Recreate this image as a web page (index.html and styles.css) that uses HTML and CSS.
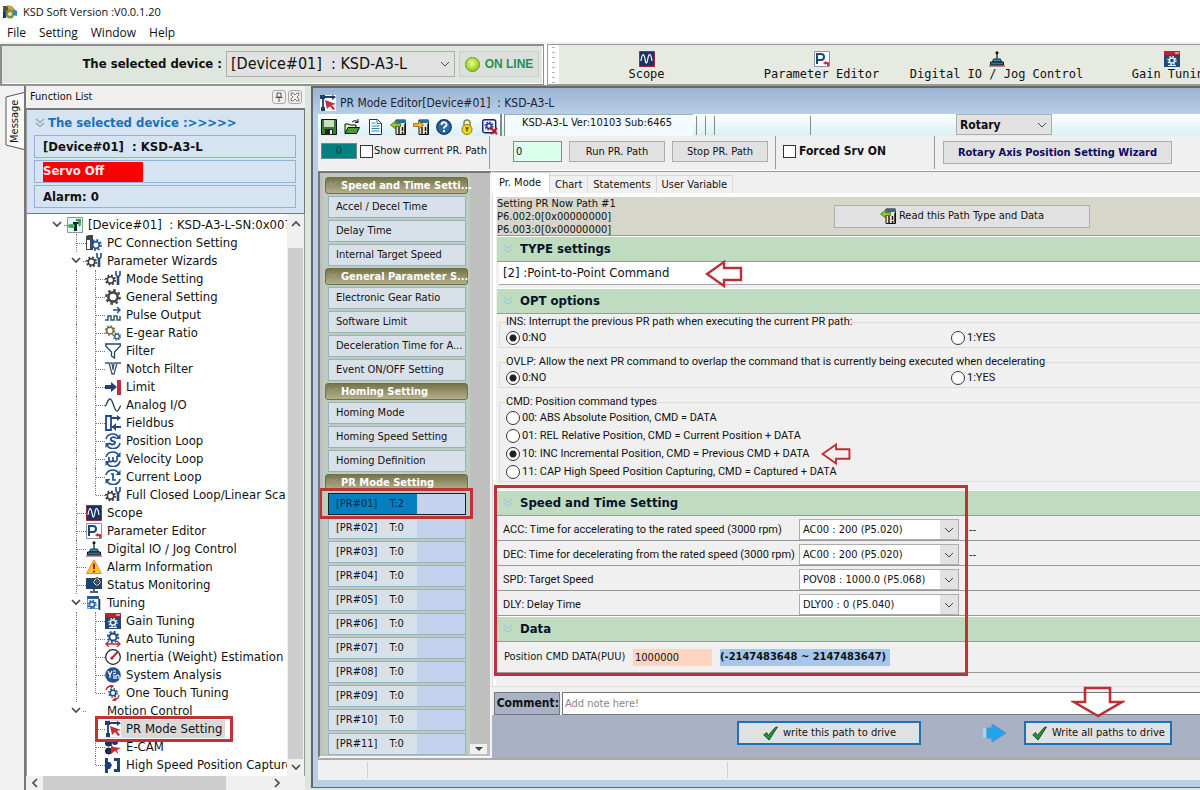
FILE: index.html
```html
<!DOCTYPE html>
<html lang="en">
<head>
<meta charset="utf-8">
<title>KSD Soft</title>
<link rel="stylesheet" href="styles.css">
</head>
<body>
<svg class="defs" aria-hidden="true">
  <symbol id="i-app" viewBox="0 0 16 16"><path d="M1 2h5l2 2v5H1z" fill="#4a5a3a"/><path d="M5 1l5 1 3 4-6 1z" fill="#c9a23c"/><path d="M1 8h3v6H1z" fill="#1b2a8a"/><circle cx="8" cy="10" r="4.5" fill="#7d9440"/><circle cx="8" cy="10" r="2" fill="#e6e3b0"/><path d="M11 5l4 2v5l-4-1z" fill="#2b86c4"/></symbol>
  <symbol id="i-wrench" viewBox="0 0 16 16"><circle cx="5.500" cy="9" r="3.200" fill="none" stroke="#3b3b3b" stroke-width="1.500"/><circle cx="5.500" cy="9" r="4.700" fill="none" stroke="#3b3b3b" stroke-width="1.800" stroke-dasharray="1.800 1.890"/><path d="M11 0v4l2 2 2-2V0" fill="none" stroke="#244c83" stroke-width="1.6"/><path d="M13 5v9" stroke="#244c83" stroke-width="2.6"/></symbol>
  <symbol id="i-gear" viewBox="0 0 16 16"><circle cx="8" cy="8" r="4.6" fill="none" stroke="#474747" stroke-width="2.6"/><circle cx="8" cy="8" r="6.7" fill="none" stroke="#474747" stroke-width="2.4" stroke-dasharray="2.6 2.66"/></symbol>
  <symbol id="i-device" viewBox="0 0 16 16"><path d="M.5.5h15v15H.5z" fill="#e8f3f6" stroke="#7c9a9c"/><path d="M6 5h6v2h-2v7H7V7H6z" fill="#16202e"/><path d="M9 2h5v3h-3V4H9z" fill="#3f9a4e"/><ellipse cx="4.500" cy="9" rx="3.500" ry="2" fill="#3fae55"/><path d="M11 5l3-1v4l-2 2z" fill="#3fae55"/></symbol>
  <symbol id="i-pc" viewBox="0 0 16 16"><path d="M0 1l3-1h4v15H0z" fill="#444"/><path d="M1 5h3v9H1z" fill="#fff"/><circle cx="10" cy="10" r="3.3" fill="#fff" stroke="#1f5b9c" stroke-width="1.8"/><circle cx="10" cy="10" r="5" fill="none" stroke="#1f5b9c" stroke-width="1.8" stroke-dasharray="1.9 2"/></symbol>
  <symbol id="i-pulse" viewBox="0 0 16 16"><path d="M0 13h3V9h3v4h3V9h3v4h3V9" fill="none" stroke="#2f5872" stroke-width="1.5"/><path d="M8 3h7M12 0l3 3-3 3" fill="none" stroke="#1f4f8c" stroke-width="1.4"/></symbol>
  <symbol id="i-egear" viewBox="0 0 16 16"><circle cx="5" cy="5.5" r="3.3" fill="none" stroke="#6e6a3c" stroke-width="1.5"/><circle cx="5" cy="5.5" r="4.6" fill="none" stroke="#6e6a3c" stroke-width="1.4" stroke-dasharray="1.7 1.9"/><circle cx="12" cy="11.5" r="2.3" fill="none" stroke="#28598c" stroke-width="1.3"/><circle cx="12" cy="11.5" r="3.5" fill="none" stroke="#28598c" stroke-width="1.3" stroke-dasharray="1.3 1.45"/></symbol>
  <symbol id="i-filter" viewBox="0 0 16 16"><path d="M.7 1h14.6v2L9.5 9v6l-3-2V9L.7 3z" fill="#fff" stroke="#234563" stroke-width="1.3"/></symbol>
  <symbol id="i-notch" viewBox="0 0 16 16"><path d="M0 2h4l3 11h2l3-11h4M5 2h2l1 7 1-7h2" fill="none" stroke="#3b5879" stroke-width="1.300"/></symbol>
  <symbol id="i-limit" viewBox="0 0 16 16"><path d="M0 6h6V3l6 5-6 5v-3H0z" fill="#24407c"/><path d="M12 1h4v15h-4z" fill="#c12a45"/></symbol>
  <symbol id="i-analog" viewBox="0 0 16 16"><path d="M0 9c2 0 2-7 5-7s4 12 7 12c2 0 2-4 4-5" fill="none" stroke="#2a4560" stroke-width="1.4"/></symbol>
  <symbol id="i-bus" viewBox="0 0 16 16"><path d="M1 1h5v14H1zM6 3h8M7 12h9" fill="none" stroke="#1f487f" stroke-width="1.8"/><path d="M12 0l4 3-4 3zM11 8l-4 4 4 4z" fill="#1f487f"/></symbol>
  <symbol id="i-loopbase" viewBox="0 0 16 16"><path d="M1 6a7 7 0 0 1 13-1M15 10A7 7 0 0 1 2 12" fill="none" stroke="#20508a" stroke-width="1.6"/><path d="M15.500 1v5h-5zM.5 15v-5h5z" fill="#20508a"/></symbol>
  <symbol id="i-pos" viewBox="0 0 16 16"><use href="#i-loopbase"/><path d="M11 5c-3-2-6 0-5 2s5 1 4 3-4 2-6 0" fill="none" stroke="#20508a" stroke-width="1.8"/></symbol>
  <symbol id="i-vel" viewBox="0 0 16 16"><use href="#i-loopbase"/><path d="M4 6c-1 5 3 6 4 3 1 3 5 2 4-3M8 6v3" fill="none" stroke="#20508a" stroke-width="1.7"/></symbol>
  <symbol id="i-cur" viewBox="0 0 16 16"><use href="#i-loopbase"/><path d="M8 5v6h3M6 5h3" fill="none" stroke="#20508a" stroke-width="1.7"/></symbol>
  <symbol id="i-scope" viewBox="0 0 16 16"><path d="M.5.5h15v15H.5z" fill="#1b3263" stroke="#a0283a"/><path d="M2 10c1-8 3-8 4-2s2 5 3-1 3-4 4 3" fill="none" stroke="#fff" stroke-width="1.2"/></symbol>
  <symbol id="i-param" viewBox="0 0 16 16"><path d="M.5.5h15v15H.5z" fill="#fff" stroke="#8296aa"/><path d="M3 13V3h4a3 3 0 0 1 0 6H4" fill="none" stroke="#1d4779" stroke-width="2"/><path d="M9 12l3-2v1h3v4h-2v-2h-1v1z" fill="#cf2e38"/></symbol>
  <symbol id="i-jog" viewBox="0 0 16 16"><path d="M8 1v9" stroke="#111" stroke-width="1.2"/><circle cx="8" cy="1.800" r="1.500" fill="#111"/><path d="M4.500 8h7l1 3h-9z" fill="#2f93b5" stroke="#12344a"/><path d="M1.500 11h13v3h-13z" fill="#237896" stroke="#111"/><path d="M0 15h16" stroke="#a02330"/></symbol>
  <symbol id="i-alarm" viewBox="0 0 16 16"><path d="M8 .8L15.400 14.500H.6z" fill="#fbc62c" stroke="#dc8f1c"/><path d="M8 4.500v5.500M8 11.500v2" stroke="#b3231e" stroke-width="2"/></symbol>
  <symbol id="i-monitor" viewBox="0 0 16 16"><path d="M0 1h16v11H0z" fill="#1b4473"/><path d="M7 12h2v2h3v2H4v-2h3z" fill="#52606c"/><path d="M11 0l5 5-5 5-5-5z" fill="#dfe8ef" stroke="#111" stroke-width=".7"/><circle cx="11" cy="5" r="2" fill="none" stroke="#111"/><path d="M11 1v8M7 5h8" stroke="#111" stroke-width=".8"/></symbol>
  <symbol id="i-tuning" viewBox="0 0 16 16"><path d="M1.500 3h11v10.500h-11z" fill="#f3f7fa" stroke="#6f9ccb"/><path d="M1 1h12v3H1z" fill="#295a92"/><circle cx="6" cy="9.500" r="2.600" fill="none" stroke="#2767a5" stroke-width="1.600"/><circle cx="6" cy="9.500" r="4" fill="none" stroke="#2767a5" stroke-width="1.400" stroke-dasharray="1.500 1.640"/><path d="M13.500 4v11" stroke="#333" stroke-width="1.600"/></symbol>
  <symbol id="i-gain" viewBox="0 0 16 16"><path d="M0 0h16v16H0z" fill="#214a79"/><path d="M0 0h16v4H0z" fill="#b9252e"/><path d="M11 2h4" stroke="#fff"/><circle cx="8" cy="9.500" r="2.600" fill="none" stroke="#e9f1f7" stroke-width="1.500"/><circle cx="8" cy="9.500" r="4" fill="none" stroke="#e9f1f7" stroke-width="1.400" stroke-dasharray="1.500 1.640"/><path d="M4 14.500h8" stroke="#e9f1f7"/></symbol>
  <symbol id="i-auto" viewBox="0 0 16 16"><circle cx="8" cy="6" r="3.600" fill="none" stroke="#1f4c86" stroke-width="2"/><circle cx="8" cy="6" r="5.300" fill="none" stroke="#1f4c86" stroke-width="1.800" stroke-dasharray="2 2.160"/><path d="M1 13h14M4 10l-3 3 3 3M12 10l3 3-3 3" fill="none" stroke="#b62b35" stroke-width="1.300"/></symbol>
  <symbol id="i-inertia" viewBox="0 0 16 16"><circle cx="8" cy="8" r="7.300" fill="#fff" stroke="#1a1a1a" stroke-width="1.200"/><path d="M6 10L12.500 3" stroke="#b62b35" stroke-width="2"/><circle cx="7" cy="9" r="1.500" fill="#b62b35"/></symbol>
  <symbol id="i-system" viewBox="0 0 16 16"><circle cx="8" cy="8" r="7.800" fill="#24548c"/><path d="M3 4l2 4 2-4M5 8v3M8 4h3M9 8v4M11 12V9q2-2 3 0v3M8 7l3-1" fill="none" stroke="#fff" stroke-width="1.200"/></symbol>
  <symbol id="i-touch" viewBox="0 0 16 16"><circle cx="8" cy="8" r="2.800" fill="none" stroke="#1f4c86" stroke-width="1.600"/><circle cx="8" cy="8" r="4.200" fill="none" stroke="#1f4c86" stroke-width="1.500" stroke-dasharray="1.600 1.700"/><path d="M1 5q1-4 6-4M5 0l3 1-2 2M14 10q0 4-5 5M11 13l-3 2 3 1" fill="none" stroke="#b62b35" stroke-width="1.300"/></symbol>
  <symbol id="i-pr" viewBox="0 0 16 16"><path d="M0 0h16v16H0z" fill="#fff"/><path d="M3 15V2h12" fill="none" stroke="#20406c" stroke-width="1.800"/><path d="M0 0h5v4H0zM1 12h4v4H1zM12 0l4 2-4 3z" fill="#20406c"/><path d="M5 5l11 4-4 1 3 4-2 1-3-4-3 3z" fill="#c52c3c"/></symbol>
  <symbol id="i-ecam" viewBox="0 0 16 16"><circle cx="3.500" cy="4" r="3.500" fill="#1c2f66"/><circle cx="10" cy="3" r="3" fill="#1c2f66"/><circle cx="3.500" cy="12" r="3" fill="#1c2f66" stroke="#111"/><path d="M6 4l2 4 8 1-4 2 1 4-3-3-4 3z" fill="#c52c3c"/></symbol>
  <symbol id="i-capture" viewBox="0 0 16 16"><path d="M0 1h3v4h2l2 3-2 4H3v4H0zM9 1h6v14H9v-3h3V4H9z" fill="#1d3f7c"/></symbol>
  <symbol id="i-save" viewBox="0 0 16 16"><path d="M.5.5h15v15H.5z" fill="#3d7b33" stroke="#111"/><path d="M3 1h10v7H3z" fill="#c9dcc4"/><path d="M4 10h8v6H4z" fill="#222"/><path d="M9 11h2v4H9z" fill="#eee"/></symbol>
  <symbol id="i-open" viewBox="0 0 16 16"><path d="M1 14V5h4l1 1h6v2" fill="#dff0b2" stroke="#111"/><path d="M1 14.500l3-6h11.500l-3 6z" fill="#4a9a36" stroke="#111"/><path d="M8 3q3-3 6 0M14 0v3.500h-3" fill="none" stroke="#111"/></symbol>
  <symbol id="i-doc" viewBox="0 0 16 16"><path d="M2.500.5h8l4 4v11h-12z" fill="#fff" stroke="#1b3350"/><path d="M10 .5v4h4M4.500 4h4M4.500 7h8M4.500 9.500h8M4.500 12h8" fill="none" stroke="#2f86a8"/></symbol>
  <symbol id="i-read" viewBox="0 0 16 16"><path d="M6 1h9.500v14.500H6z" fill="#ece4cc" stroke="#111"/><path d="M7 1h9v3H7z" fill="#1e7398"/><path d="M9 7v8M12.500 8v4M12.500 13v2M15 5v10" stroke="#111" stroke-width="1.400"/><path d="M.5 6l5-4v2.500h5v3h-5V10z" fill="#94c23c" stroke="#4a6a1c" stroke-width=".8"/></symbol>
  <symbol id="i-write" viewBox="0 0 16 16"><path d="M6 1h9.500v14.500H6z" fill="#ece4cc" stroke="#111"/><path d="M7 1h9v3H7z" fill="#1e7398"/><path d="M9 8v7M12.500 8v4M12.500 13v2M15 5v10" stroke="#111" stroke-width="1.400"/><path d="M10.500 6l-5-4v2.500h-5v3h5V10z" fill="#f4b52c" stroke="#8a5a14" stroke-width=".8"/></symbol>
  <symbol id="i-help" viewBox="0 0 16 16"><circle cx="8" cy="8" r="7.300" fill="#2b67a0" stroke="#14304f" stroke-width="1.200"/><path d="M5.500 6c0-4 5.500-3 5 0-.3 1.500-2.500 1.500-2.500 3.500M8 11v2" fill="none" stroke="#fff" stroke-width="2"/></symbol>
  <symbol id="i-lock" viewBox="0 0 16 16"><path d="M5 7V4q0-3 3-3t3 3v3" fill="none" stroke="#8d8240" stroke-width="1.500"/><circle cx="8" cy="10.500" r="5" fill="#f2d81c" stroke="#8a7410"/><path d="M8 8.500v4M6.500 9h3" stroke="#5c4c08" stroke-width="1.400"/></symbol>
  <symbol id="i-cancel" viewBox="0 0 16 16"><rect x=".7" y=".7" width="13" height="13" rx="2" fill="#e9eef8" stroke="#1b1f70" stroke-width="1.400"/><circle cx="7" cy="7" r="2.400" fill="none" stroke="#2b3090" stroke-width="1.500"/><circle cx="7" cy="7" r="3.800" fill="none" stroke="#2b3090" stroke-width="1.400" stroke-dasharray="1.500 1.480"/><path d="M9 9l6 6M15 9l-6 6" stroke="#c4141c" stroke-width="2"/></symbol>
  <symbol id="i-check" viewBox="0 0 16 16"><path d="M.8 9.500l3-2.500 2 3L13 1.500l2.500-.5L6.500 15z" fill="#1d9a2c" stroke="#0b3d12" stroke-width=".9"/></symbol>
  <symbol id="i-down" viewBox="0 0 10 10"><path d="M1 2l4 4 4-4" fill="none" stroke="currentColor" stroke-width="1.600"/></symbol>
  <symbol id="i-dbl" viewBox="0 0 10 10"><path d="M1 1l4 3.500L9 1M1 5l4 3.500L9 5" fill="none" stroke="currentColor" stroke-width="1.200"/></symbol>
  <symbol id="i-redleft" viewBox="0 0 38 28"><path d="M2 14L19 2v6h17v12H19v6z" fill="none" stroke="#bb3034" stroke-width="2.400"/></symbol>
  <symbol id="i-reddown" viewBox="0 0 54 32"><path d="M27 30L3 16h11V2h25v14h12z" fill="none" stroke="#bb3034" stroke-width="2.600"/></symbol>
</svg>

<header class="titlebar"><svg class="ic"><use href="#i-app"/></svg><span>KSD Soft Version :V0.0.1.20</span></header>
<nav class="menu"><a href="#">File</a><a href="#">Setting</a><a href="#">Window</a><a href="#">Help</a></nav>

<div class="topbar">
  <div class="devbar">
    <label for="dev">The selected device :</label>
    <select id="dev" class="sel sel-big"><option>[Device#01] &nbsp;: KSD-A3-L</option></select>
    <button class="online"><i class="lamp"></i>ON LINE</button>
  </div>
  <div class="tools">
    <i class="grip"></i>
    <button><svg class="ic"><use href="#i-scope"/></svg>Scope</button>
    <button><svg class="ic"><use href="#i-param"/></svg>Parameter Editor</button>
    <button><svg class="ic"><use href="#i-jog"/></svg>Digital IO / Jog Control</button>
    <button><svg class="ic"><use href="#i-gain"/></svg>Gain Tuning</button>
  </div>
</div>

<main class="work">
  <aside class="strip"><button>Message</button></aside>

  <section class="panel">
    <header class="panel-head"><span>Function List</span>
      <button aria-label="Pin"><svg viewBox="0 0 10 10"><path d="M3 1h4v4H3zM1.500 5.500h7M5 6v4" fill="none" stroke="#555"/></svg></button>
      <button aria-label="Close"><svg viewBox="0 0 10 10"><path d="M1 1h2l2 2 2-2h2v2L7 5l2 2v2H7L5 7 3 9H1V7l2-2-2-2z" fill="none" stroke="#777"/></svg></button>
    </header>
    <div class="info">
      <div class="info-title"><svg class="dbl"><use href="#i-dbl"/></svg>The selected device :&gt;&gt;&gt;&gt;&gt;</div>
      <div class="info-row">[Device#01] &nbsp;: KSD-A3-L</div>
      <div class="info-row"><span class="servo">Servo Off</span></div>
      <div class="info-row">Alarm: 0</div>
    </div>
    <div class="treebox">
      <div class="tree">
        <div class="row open"><i class="cell"><svg class="chev"><use href="#i-down"/></svg></i><svg class="ic"><use href="#i-device"/></svg>[Device#01] &nbsp;: KSD-A3-L-SN:0x007</div>
        <div class="row l1"><i class="cell"></i><svg class="ic"><use href="#i-pc"/></svg>PC Connection Setting</div>
        <div class="row l1 open"><i class="cell"><svg class="chev"><use href="#i-down"/></svg></i><svg class="ic"><use href="#i-wrench"/></svg>Parameter Wizards</div>
        <div class="row l2"><i class="cell"></i><svg class="ic"><use href="#i-wrench"/></svg>Mode Setting</div>
        <div class="row l2"><i class="cell"></i><svg class="ic"><use href="#i-gear"/></svg>General Setting</div>
        <div class="row l2"><i class="cell"></i><svg class="ic"><use href="#i-pulse"/></svg>Pulse Output</div>
        <div class="row l2"><i class="cell"></i><svg class="ic"><use href="#i-egear"/></svg>E-gear Ratio</div>
        <div class="row l2"><i class="cell"></i><svg class="ic"><use href="#i-filter"/></svg>Filter</div>
        <div class="row l2"><i class="cell"></i><svg class="ic"><use href="#i-notch"/></svg>Notch Filter</div>
        <div class="row l2"><i class="cell"></i><svg class="ic"><use href="#i-limit"/></svg>Limit</div>
        <div class="row l2"><i class="cell"></i><svg class="ic"><use href="#i-analog"/></svg>Analog I/O</div>
        <div class="row l2"><i class="cell"></i><svg class="ic"><use href="#i-bus"/></svg>Fieldbus</div>
        <div class="row l2"><i class="cell"></i><svg class="ic"><use href="#i-pos"/></svg>Position Loop</div>
        <div class="row l2"><i class="cell"></i><svg class="ic"><use href="#i-vel"/></svg>Velocity Loop</div>
        <div class="row l2"><i class="cell"></i><svg class="ic"><use href="#i-cur"/></svg>Current Loop</div>
        <div class="row l2 last"><i class="cell"></i><svg class="ic"><use href="#i-wrench"/></svg>Full Closed Loop/Linear Sca</div>
        <div class="row l1"><i class="cell"></i><svg class="ic"><use href="#i-scope"/></svg>Scope</div>
        <div class="row l1"><i class="cell"></i><svg class="ic"><use href="#i-param"/></svg>Parameter Editor</div>
        <div class="row l1"><i class="cell"></i><svg class="ic"><use href="#i-jog"/></svg>Digital IO / Jog Control</div>
        <div class="row l1"><i class="cell"></i><svg class="ic"><use href="#i-alarm"/></svg>Alarm Information</div>
        <div class="row l1"><i class="cell"></i><svg class="ic"><use href="#i-monitor"/></svg>Status Monitoring</div>
        <div class="row l1 open"><i class="cell"><svg class="chev"><use href="#i-down"/></svg></i><svg class="ic"><use href="#i-tuning"/></svg>Tuning</div>
        <div class="row l2"><i class="cell"></i><svg class="ic"><use href="#i-gain"/></svg>Gain Tuning</div>
        <div class="row l2"><i class="cell"></i><svg class="ic"><use href="#i-auto"/></svg>Auto Tuning</div>
        <div class="row l2"><i class="cell"></i><svg class="ic"><use href="#i-inertia"/></svg>Inertia (Weight) Estimation</div>
        <div class="row l2"><i class="cell"></i><svg class="ic"><use href="#i-system"/></svg>System Analysis</div>
        <div class="row l2 last"><i class="cell"></i><svg class="ic"><use href="#i-touch"/></svg>One Touch Tuning</div>
        <div class="row l1 open"><i class="cell"><svg class="chev"><use href="#i-down"/></svg></i><svg class="ic"></svg>Motion Control</div>
        <div class="row l2 end picked"><i class="cell"></i><span class="pick"><svg class="ic"><use href="#i-pr"/></svg>PR Mode Setting<i class="mark"></i></span></div>
        <div class="row l2 end"><i class="cell"></i><svg class="ic"><use href="#i-ecam"/></svg>E-CAM</div>
        <div class="row l2 end last"><i class="cell"></i><svg class="ic"><use href="#i-capture"/></svg>High Speed Position Capture</div>
      </div>
      <div class="vbar"><svg class="chev up"><use href="#i-down"/></svg><i class="vthumb"></i><svg class="chev"><use href="#i-down"/></svg></div>
    </div>
    <div class="hbar"><svg class="chev left"><use href="#i-down"/></svg><i class="hthumb"></i><svg class="chev right"><use href="#i-down"/></svg></div>
  </section>

  <section class="window">
    <header class="win-title"><svg class="ic"><use href="#i-pr"/></svg>PR Mode Editor[Device#01] &nbsp;: KSD-A3-L</header>
    <div class="win-body">
      <div class="bar1">
        <div class="icons">
          <button aria-label="Save"><svg class="ic"><use href="#i-save"/></svg></button>
          <button aria-label="Open"><svg class="ic"><use href="#i-open"/></svg></button>
          <button aria-label="Document"><svg class="ic"><use href="#i-doc"/></svg></button>
          <button aria-label="Read"><svg class="ic"><use href="#i-read"/></svg></button>
          <button aria-label="Write"><svg class="ic"><use href="#i-write"/></svg></button>
          <button aria-label="Help"><svg class="ic"><use href="#i-help"/></svg></button>
          <button aria-label="Lock"><svg class="ic"><use href="#i-lock"/></svg></button>
          <button aria-label="Cancel"><svg class="ic"><use href="#i-cancel"/></svg></button>
        </div>
        <div class="ver">KSD-A3-L Ver:10103 Sub:6465</div>
        <i class="vl"></i><i class="vl"></i><i class="vl"></i><i class="vl far"></i>
        <select class="sel sel-rotary" aria-label="Axis type"><option>Rotary</option></select>
      </div>
      <div class="bar2">
        <div class="b-show"><output class="teal">0</output><label><input type="checkbox" class="cb">Show currrent PR. Path</label></div>
        <div class="b-run"><input type="text" class="num" value="0" aria-label="Path number"><button class="btn">Run PR. Path</button><button class="btn">Stop PR. Path</button></div>
        <div class="b-srv"><label><input type="checkbox" class="cb">Forced Srv ON</label></div>
        <div class="b-wiz"><button class="btn wiz">Rotary Axis Position Setting Wizard</button></div>
      </div>

      <div class="split">
        <nav class="side">
          <div class="list">
            <h3><svg class="dbl"><use href="#i-dbl"/></svg>Speed and Time Setti...</h3>
            <button>Accel / Decel Time</button>
            <button>Delay Time</button>
            <button>Internal Target Speed</button>
            <h3><svg class="dbl"><use href="#i-dbl"/></svg>General Parameter S...</h3>
            <button>Electronic Gear Ratio</button>
            <button>Software Limit</button>
            <button>Deceleration Time for A...</button>
            <button>Event ON/OFF Setting</button>
            <h3><svg class="dbl"><use href="#i-dbl"/></svg>Homing Setting</h3>
            <button>Homing Mode</button>
            <button>Homing Speed Setting</button>
            <button>Homing Definition</button>
            <h3><svg class="dbl"><use href="#i-dbl"/></svg>PR Mode Setting</h3>
            <button class="pr on"><span>[PR#01]</span><span>T:2</span><i class="mark"></i></button>
            <button class="pr"><span>[PR#02]</span><span>T:0</span></button>
            <button class="pr"><span>[PR#03]</span><span>T:0</span></button>
            <button class="pr"><span>[PR#04]</span><span>T:0</span></button>
            <button class="pr"><span>[PR#05]</span><span>T:0</span></button>
            <button class="pr"><span>[PR#06]</span><span>T:0</span></button>
            <button class="pr"><span>[PR#07]</span><span>T:0</span></button>
            <button class="pr"><span>[PR#08]</span><span>T:0</span></button>
            <button class="pr"><span>[PR#09]</span><span>T:0</span></button>
            <button class="pr"><span>[PR#10]</span><span>T:0</span></button>
            <button class="pr"><span>[PR#11]</span><span>T:0</span></button>
          </div>
          <div class="side-bar"><button aria-label="Scroll down"></button></div>
        </nav>

        <div class="content">
          <div class="tabs"><button class="active">Pr. Mode</button><button>Chart</button><button>Statements</button><button>User Variable</button></div>
          <div class="page">
            <div class="now">
              <p>Setting PR Now Path #1<br>P6.002:0[0x00000000]<br>P6.003:0[0x00000000]</p>
              <button class="btn read"><svg class="ic"><use href="#i-read"/></svg>Read this Path Type and Data</button>
            </div>
            <h2><svg class="dbl"><use href="#i-dbl"/></svg>TYPE settings</h2>
            <div class="type">[2] :Point-to-Point Command<svg class="arrow-l"><use href="#i-redleft"/></svg></div>
            <h2><svg class="dbl"><use href="#i-dbl"/></svg>OPT options</h2>
            <div class="opts">
              <fieldset><legend>INS: Interrupt the previous PR path when executing the current PR path:</legend>
                <div class="two"><label><input type="radio" name="ins" checked>0:NO</label><label><input type="radio" name="ins">1:YES</label></div></fieldset>
              <fieldset><legend>OVLP: Allow the next PR command to overlap the command that is currently being executed when decelerating</legend>
                <div class="two"><label><input type="radio" name="ovlp" checked>0:NO</label><label><input type="radio" name="ovlp">1:YES</label></div></fieldset>
              <fieldset class="cmd"><legend>CMD: Position command types</legend>
                <label><input type="radio" name="cmd">00: ABS Absolute Position, CMD = DATA</label>
                <label><input type="radio" name="cmd">01: REL Relative Position, CMD = Current Position + DATA</label>
                <label><input type="radio" name="cmd" checked>10: INC Incremental Position, CMD = Previous CMD + DATA<svg class="arrow-s"><use href="#i-redleft"/></svg></label>
                <label><input type="radio" name="cmd">11: CAP High Speed Position Capturing, CMD = Captured + DATA</label></fieldset>
            </div>
            <div class="marked">
              <h2><svg class="dbl"><use href="#i-dbl"/></svg>Speed and Time Setting</h2>
              <div class="prow"><label for="acc">ACC: Time for accelerating to the rated speed (3000 rpm)</label><select id="acc" class="sel sel-w"><option>AC00 : 200 (P5.020)</option></select><span>--</span></div>
              <div class="prow"><label for="dec">DEC: Time for decelerating from the rated speed (3000 rpm)</label><select id="dec" class="sel sel-w"><option>AC00 : 200 (P5.020)</option></select><span>--</span></div>
              <div class="prow"><label for="spd">SPD: Target Speed</label><select id="spd" class="sel sel-w"><option>POV08 : 1000.0 (P5.068)</option></select></div>
              <div class="prow"><label for="dly">DLY: Delay Time</label><select id="dly" class="sel sel-w"><option>DLY00 : 0 (P5.040)</option></select></div>
              <h2><svg class="dbl"><use href="#i-dbl"/></svg>Data</h2>
              <div class="data"><label for="puu">Position CMD DATA(PUU)</label><input id="puu" type="text" value="1000000"><b>(-2147483648 ~ 2147483647)</b></div>
              <i class="mark"></i>
            </div>
          </div>
          <div class="comment"><label for="note">Comment:</label><input id="note" type="text" placeholder="Add note here!"></div>
          <div class="actions">
            <button class="act a1"><svg class="ck"><use href="#i-check"/></svg>write this path to drive</button>
            <svg class="blue" viewBox="0 0 24 20"><path d="M0 5h3v10H0z" fill="#9adcf8"/><path d="M4 5h5V1l14 9-14 9v-4H4z" fill="#1ea4f0" stroke="#5b8fb8"/></svg>
            <button class="act a2"><svg class="ck"><use href="#i-check"/></svg>Write all paths to drive<svg class="arrow-d"><use href="#i-reddown"/></svg></button>
          </div>
        </div>
      </div>
      <footer class="status"><i></i><i></i><i></i></footer>
    </div>
  </section>
</main>
</body>
</html>
```
FILE: styles.css
```css
* { box-sizing: border-box; }
body { margin: 0; height: 100vh; overflow: hidden; display: flex; flex-direction: column; background: #fff; color: #111; font: 11px/14px "DejaVu Sans Condensed", "DejaVu Sans", sans-serif; }
button, input, select { font: inherit; color: inherit; margin: 0; border-radius: 0; }
button { padding: 0; border: 0; background: none; white-space: nowrap; }
h2, h3, p, fieldset, legend { margin: 0; padding: 0; }
.defs { position: absolute; width: 0; height: 0; }
.ic { width: 16px; height: 16px; flex: none; display: block; }
.chev { width: 10px; height: 10px; color: #444; display: block; }
.dbl { width: 10px; height: 10px; flex: none; }
.mark { position: absolute; border: 3px solid #bf3337; pointer-events: none; }

.titlebar { flex: none; height: 24px; display: flex; align-items: center; gap: 5px; padding-left: 2px; font: 11px/16px "Open Sans", sans-serif; }
.menu { flex: none; height: 20px; display: flex; gap: 13px; padding-left: 7px; font: 12px/18px "Open Sans", sans-serif; border-bottom: 2px solid #f1f1f1; }
.menu a { color: #111; text-decoration: none; }

.sel { appearance: none; border: 1px solid #adadad; padding: 0 20px 0 4px; background: #e2e2e2 url("data:image/svg+xml,%3Csvg xmlns='http://www.w3.org/2000/svg' width='10' height='8'%3E%3Cpath d='M1 2l4 4 4-4' fill='none' stroke='%23444'/%3E%3C/svg%3E") no-repeat right 4px center; }
.btn { border: 1px solid #adadad; background: #e1e1e1; height: 21px; }

.topbar { flex: none; height: 41px; display: flex; gap: 3px; background: #fff; }
.devbar { flex: none; width: 544px; display: flex; align-items: center; justify-content: flex-end; gap: 4px; padding: 0 4px 2px 0; background: #dfe6dd; border: 1px solid #8d8d8d; border-width: 2px 1px 1px 2px; box-shadow: inset -1px -1px #fff; }
.devbar label { font-weight: bold; font-size: 13px; }
.sel-big { width: 229px; height: 26px; font-size: 16px; }
.online { width: 80px; height: 26px; display: flex; align-items: center; justify-content: center; gap: 5px; background: #dcdfdc; border: 1px solid #c3cfd2; color: #1f9258; font: bold 12px "Liberation Sans", sans-serif; }
.lamp { width: 15px; height: 15px; border-radius: 50%; border: 1px solid #5e9a24; background: radial-gradient(circle at 45% 40%, #efff9a, #a8d82c 55%, #6fae1c); }
.tools { flex: 1; min-width: 0; overflow: hidden; display: flex; background: #e6eae0; border: 1px solid #9a9a9a; border-width: 1px 0 1px 1px; }
.grip { flex: none; width: 11px; background: radial-gradient(#b5b5b5 1px, #fff 2px); background-size: 11px 5px; }
.tools button { flex: none; width: 175px; display: flex; flex-direction: column; align-items: center; padding-top: 6px; font: 12px/14px "DejaVu Sans Mono", monospace; }

.work { flex: 1; min-height: 0; display: flex; background: #dce6e0; border-top: 1px solid #9a9a9a; }
.strip { flex: none; width: 24px; padding: 6px 0 0 5px; background: #f1f1f1; }
.strip button { width: 19px; height: 58px; writing-mode: vertical-rl; transform: rotate(180deg); text-align: center; background: url("data:image/svg+xml,%3Csvg xmlns='http://www.w3.org/2000/svg' width='19' height='58'%3E%3Cpath d='M0 .5L18 5v48L0 57.500' fill='%23fafafa' stroke='%23555'/%3E%3C/svg%3E") no-repeat; }
.panel { flex: none; width: 281px; display: flex; flex-direction: column; border-left: 2px solid #777; background: #f0f0f0; }
.panel-head { flex: none; height: 22px; display: flex; align-items: center; gap: 2px; padding: 0 3px 0 4px; }
.panel-head span { flex: 1; }
.panel-head button { width: 14px; height: 14px; border: 1px solid #aaa; border-radius: 3px; display: grid; place-items: center; }
.panel-head button svg { width: 10px; height: 10px; }
.info { flex: none; height: 106px; display: flex; flex-direction: column; gap: 2px; padding: 3px 8px 4px 7px; background: #d6e4f1; border: 1px solid #777; border-left-color: #999; border-top-width: 2px; font-size: 13px; font-weight: bold; }
.info-title { height: 20px; display: flex; align-items: center; gap: 3px; padding-left: 1px; color: #1872b9; }
.info-title .dbl { color: #8da3b3; }
.info-row { height: 23px; display: flex; align-items: center; padding-left: 8px; border: 1px solid #8fb2da; }
.servo { width: 100px; height: 20px; background: #fb0000; color: #ffe9ec; line-height: 18px; }
.treebox { flex: 1; min-height: 0; display: flex; background: #fff; border: solid #999; border-width: 0 1px; }
.tree { flex: 1; min-width: 0; overflow: hidden; padding-top: 2px; font-size: 13px; }
.row { position: relative; height: 18px; display: flex; align-items: center; padding-left: 20px; white-space: nowrap; }
.row .ic { margin-right: 5px; }
.l1 { padding-left: 39px; }
.l2 { padding-left: 58px; }
.cell { flex: none; position: relative; width: 20px; height: 18px; display: grid; place-items: center; }
.cell::before { content: ""; position: absolute; left: 10px; top: 0; width: 10px; height: 18px; border-left: 1px dotted #777; }
.cell::after { content: ""; position: absolute; left: 11px; top: 9px; width: 9px; border-top: 1px dotted #777; }
.open .cell::before { display: none; }
.open .cell::after { left: 17px; width: 3px; }
.last .cell::before { height: 9px; }
.l2::before { content: ""; position: absolute; left: 49px; top: 0; height: 18px; border-left: 1px dotted #777; }
.l2.end::before { display: none; }
.pick { position: relative; display: flex; align-items: center; height: 18px; padding-right: 3px; background: #d9d9d9; }
.pick .mark { inset: -4px -8px -4px -10px; }
.picked { z-index: 1; }
.vbar { flex: none; width: 17px; display: flex; flex-direction: column; align-items: center; justify-content: space-between; padding: 4px 1px 3px; background: #f0f0f0; }
.vthumb { flex: 1; width: 15px; margin: 20px 0 4px; background: #cdcdcd; }
.up { transform: rotate(180deg); }
.left { transform: rotate(90deg); }
.right { transform: rotate(-90deg); }
.hbar { flex: none; height: 14px; display: flex; align-items: center; padding: 0 22px 0 3px; background: #f0f0f0; }
.hthumb { width: 183px; height: 14px; margin: 0 auto 0 4px; background: #cdcdcd; }

.window { flex: 1; min-width: 0; margin: 0 0 2px 6px; display: flex; flex-direction: column; border: solid #666; border-width: 2px 0 1px 2px; background: #b8cfe8; padding: 0 0 7px 5px; background-image: linear-gradient(#9bb4d1, #b8cfe9 27px); }
.win-title { flex: none; height: 26px; display: flex; align-items: center; gap: 4px; padding-left: 2px; padding-top: 3px; font-size: 12px; color: #1b2433; }
.win-body { flex: 1; min-height: 0; display: flex; flex-direction: column; background: #f0f0f0; }
.bar1 { flex: none; height: 22px; display: flex; align-items: flex-start; background: linear-gradient(#fff, #d7f1f8); }
.icons { display: flex; gap: 7px; width: 184px; height: 22px; padding: 4px 0 0 3px; border-right: 2px solid #888; }
.ver { width: 189px; height: 22px; margin-left: 2px; padding-right: 4px; border-left: 1px solid #888; border-top: 1px solid #aaa; background: #f2fbfd; text-align: center; line-height: 15px; }
.vl { width: 1px; height: 19px; margin: 2px 0 0 8px; background: #888; }
.ver + .vl { margin-left: 3px; }
.vl.far { margin-left: 95px; }
.sel-rotary { width: 96px; height: 21px; margin-left: 145px; font-weight: bold; font-size: 12px; padding-left: 3px; }
.bar2 { flex: none; height: 35px; display: flex; border-bottom: 1px solid #fff; }
.bar2 > div { display: flex; border-right: 1px solid #999; height: 33px; padding-top: 5px; }
.bar2 label { display: flex; align-items: center; height: 20px; gap: 3px; white-space: nowrap; }
.cb { appearance: none; width: 13px; height: 13px; border: 1px solid #333; background: #fff; flex: none; }
.b-show { width: 172px; gap: 3px; padding-left: 3px; }
.b-show label { gap: 1px; }
.teal { width: 36px; height: 16px; margin-top: 2px; flex: none; background: #058080; color: #0c3c40; text-align: center; border: 1px solid #6a8f8f; line-height: 14px; }
.b-run { width: 286px; gap: 7px; padding-left: 23px; }
.num { width: 49px; height: 21px; padding: 0 2px; background: #dcffec; border: 1px solid #888; }
.b-run .btn { width: 96px; }
.b-srv { width: 159px; padding-left: 7px; font-weight: bold; font-size: 12px; }
.bar2 .b-wiz { padding-left: 8px; border: 0; }
.wiz { width: 229px; height: 23px; font-weight: bold; color: #0a0a5e; }

.split { flex: 1; min-height: 0; display: flex; border-bottom: 2px solid #aaa; }
.side { flex: none; width: 174px; display: flex; padding: 1px 2px 2px 3px; background: #bfbfbf; border: 2px solid #777; border-right-color: #f4f4f4; border-bottom-color: #f4f4f4; overflow: hidden; }
.list { width: 147px; display: flex; flex-direction: column; gap: 2px; padding: 3px 2px 0; background: #bccdbd; }
.list h3 { flex: none; height: 17px; display: flex; align-items: center; gap: 3px; padding-left: 2px; font-size: 11px; color: #fff; white-space: nowrap; border: 1px solid #70704c; border-radius: 3px; background: linear-gradient(#77734a, #b4b08c); }
.list h3 .dbl { color: #999d80; }
.list button { flex: none; position: relative; height: 22px; margin: 0 2px 0 3px; padding-left: 7px; text-align: left; background: #d8e1ea; border: 1px solid #96b2bd; }
.list .pr { display: flex; align-items: center; gap: 12px; background: linear-gradient(90deg, #d8e1ea 88px, #c5d2ed 88px); }
.list .pr.on { z-index: 1; color: #0b2c4c; border-color: #10242e; background: linear-gradient(90deg, #057fbe 88px, #c5d2ed 88px); }
.pr .mark { inset: -6px -8px -5px -10px; }
.side-bar { flex: 1; display: flex; align-items: flex-end; }
.side-bar button { width: 17px; height: 10px; background: #f0f0f0; display: grid; place-items: center; }
.side-bar button::after { content: ""; border: 4px solid transparent; border-top-color: #444; border-bottom: 0; }

.content { flex: 1; min-width: 0; display: flex; flex-direction: column; border-top: 1px solid #999; }
.tabs { flex: none; height: 21px; display: flex; align-items: flex-end; }
.tabs button { height: 18px; padding: 0 5px; border: 1px solid #d9d9d9; border-width: 1px 1px 0 0; }
.tabs .active { height: 21px; padding: 0 8px 0 7px; background: #fff; }
.page { flex: 1; min-height: 0; overflow: hidden; padding: 4px 0 0 4px; border: 1px solid #ddd; border-width: 0 0 1px 1px; box-shadow: inset 3px 4px #fff; }
.now { height: 39px; display: flex; align-items: center; background: #d6d6ca; border-bottom: 1px solid #999; }
.now p { width: 337px; line-height: 13px; overflow: hidden; height: 38px; }
.read { width: 256px; height: 23px; display: flex; align-items: center; justify-content: center; gap: 3px; }
.page h2 { height: 26px; display: flex; align-items: center; gap: 7px; padding-left: 6px; font-size: 13px; color: #06122c; background: #c0dcc0; border: solid #fff; border-width: 1px 0 0; border-bottom: 1px solid #999; }
.page h2 .dbl { color: #9fcbe0; }
.type { position: relative; height: 23px; margin: 0 0 3px 2px; padding-left: 4px; background: #fff; font-size: 13px; line-height: 22px; border-bottom: 1px solid #aaa; }
.arrow-l { position: absolute; left: 206px; top: -2px; width: 38px; height: 28px; }
.arrow-s { position: absolute; right: -42px; top: -4px; width: 30px; height: 26px; }
.opts { display: flex; flex-direction: column; gap: 7px; padding: 1px 0 8px 2px; font-family: Roboto, sans-serif; }
.opts fieldset { min-width: 0; border: 1px solid #dcdcdc; border-right: 0; padding: 0 0 0 6px; }
.opts legend { line-height: 14px; }
.opts label { position: relative; display: flex; width: max-content; align-items: center; gap: 2px; height: 18px; }
.opts input { appearance: none; width: 14px; height: 14px; margin: 0; border: 1px solid #333; border-radius: 50%; background: #fff; }
.opts input:checked { background: radial-gradient(circle, #222 3px, #fff 4px); }
.two { display: grid; grid-template-columns: 445px 1fr; }
.marked { position: relative; }
.marked > .mark { left: -3px; top: -5px; width: 474px; bottom: -3px; }
.prow { height: 25px; display: flex; align-items: center; padding: 3px 0 0 5px; border-bottom: 1px solid #999; border-left: 1px solid #fff; }
.prow label { width: 296px; white-space: nowrap; font-family: Roboto, sans-serif; }
.prow span { padding-left: 10px; }
.sel-w { width: 160px; height: 21px; padding-left: 3px; background-image: url("data:image/svg+xml,%3Csvg xmlns='http://www.w3.org/2000/svg' width='18' height='19'%3E%3Cpath d='M0 0h18v19H0z' fill='%23e2e2e2'/%3E%3Cpath d='M5 8l4 4 4-4' fill='none' stroke='%23444'/%3E%3C/svg%3E"); background-position: right center; background-color: #fff; }
.data { height: 31px; display: flex; align-items: center; padding-left: 7px; border-bottom: 1px solid #999; }
.data label { width: 129px; white-space: nowrap; }
.data input { width: 79px; height: 17px; padding: 0 2px; border: 0; background: #fdd5c0; margin-right: 8px; }
.data b { height: 17px; line-height: 16px; padding-right: 4px; background: #a6c6ec; white-space: nowrap; }
.comment { flex: none; height: 23px; margin-top: 5px; display: flex; gap: 2px; }
.comment label { width: 66px; margin-left: 2px; background: #a8b2c4; border: 1px solid #777; font-weight: bold; font-size: 12px; line-height: 20px; text-align: right; white-space: nowrap; }
.comment input { flex: 1; min-width: 0; border: 1px solid #777; border-right: 0; padding: 0 2px; background: #fff; }
.comment input::placeholder { color: #888; opacity: 1; }
.actions { flex: none; height: 43px; display: flex; align-items: flex-start; padding: 6px 0 0 245px; background: #a8b2c4; }
.act { position: relative; height: 24px; display: flex; align-items: center; justify-content: center; gap: 4px; background: #e1e1e1; border: 2px solid #1c72b4; }
.a1 { width: 184px; }
.a2 { width: 148px; }
.ck { width: 17px; height: 15px; }
.blue { width: 24px; height: 20px; margin: 2px 17px 0 62px; }
.arrow-d { position: absolute; left: 45px; top: -38px; width: 54px; height: 34px; }
.status { flex: none; height: 20px; display: flex; padding: 2px 0; }
.status i { border-right: 1px solid #d0d0d0; width: 50px; }
.status i:nth-child(2) { width: 360px; }
.status i:nth-child(3) { flex: 1; border: 0; }
```
